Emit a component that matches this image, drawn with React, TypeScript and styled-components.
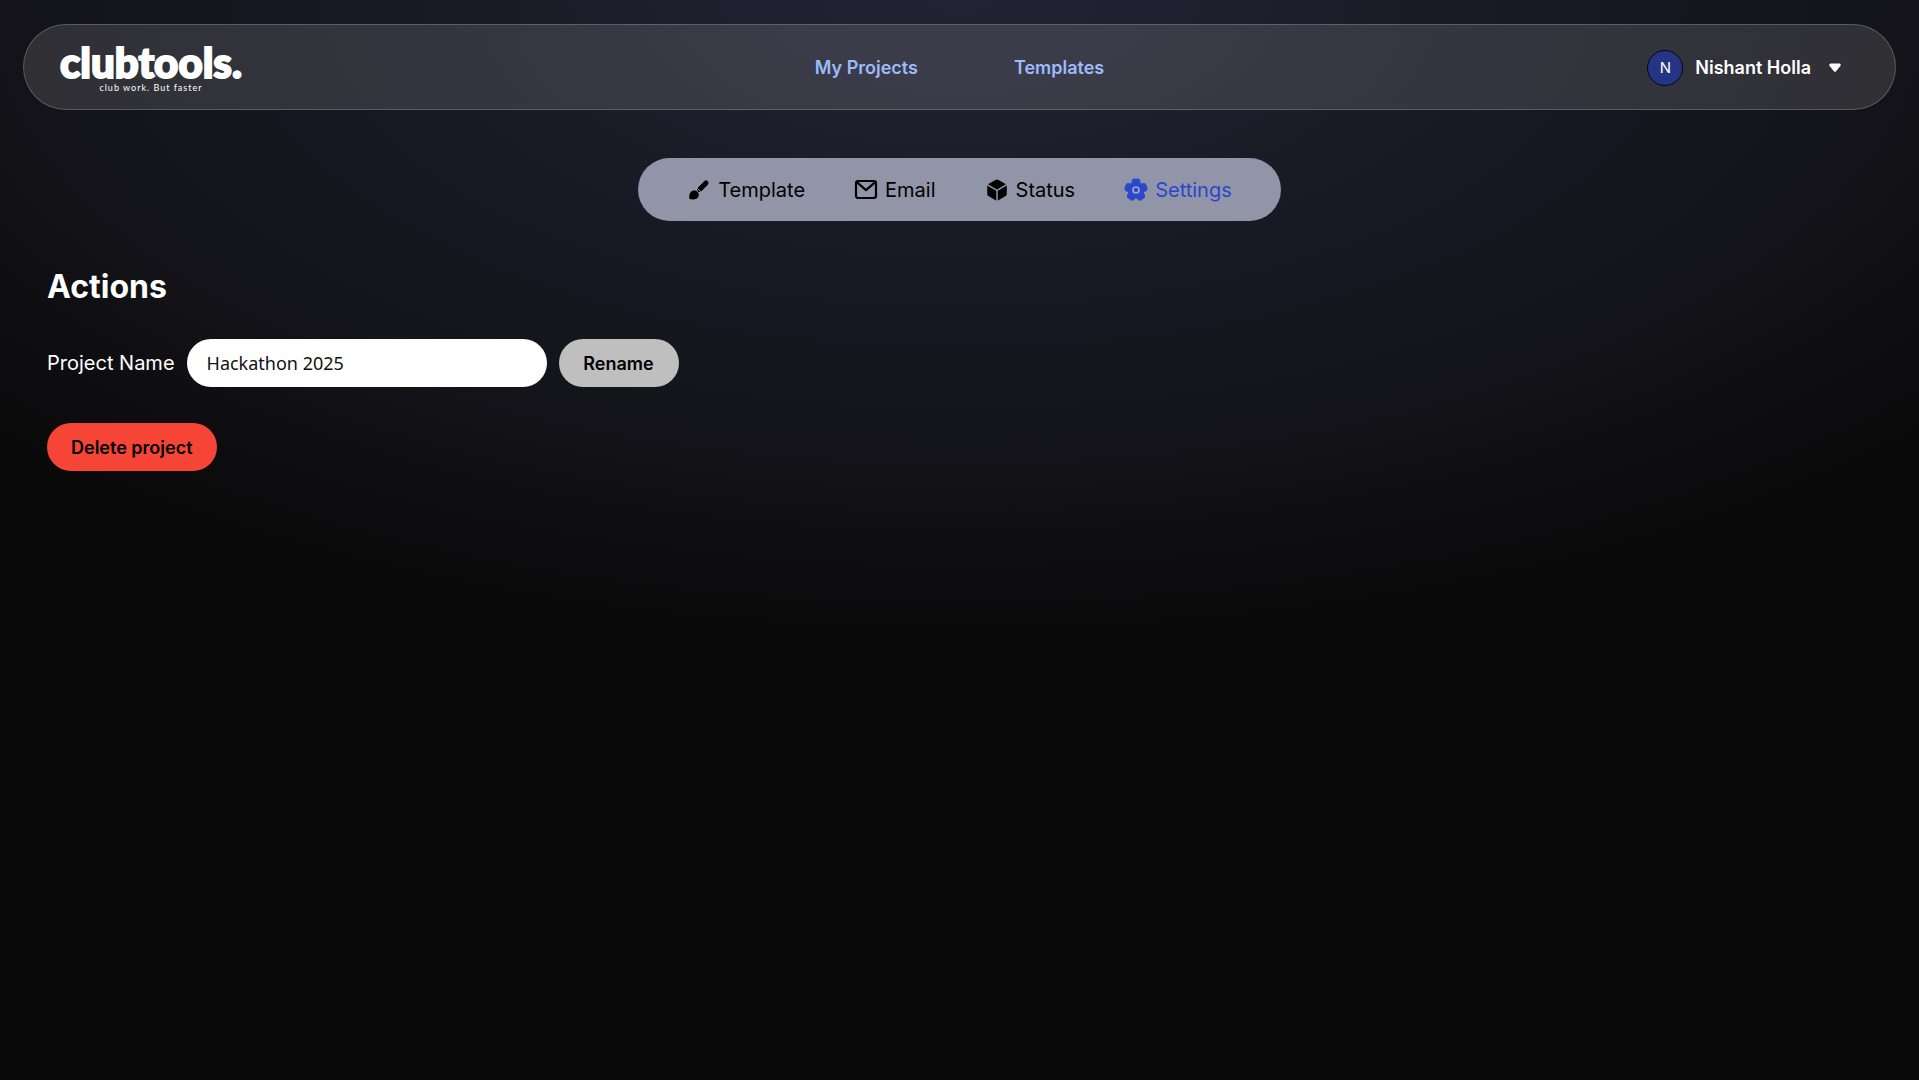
import React, { useState } from 'react';
import styled, { createGlobalStyle } from 'styled-components';
import { IoCube } from 'react-icons/io5';

const GlobalStyle = createGlobalStyle`
  *, *::before, *::after { box-sizing: border-box; }
  body {
    margin: 0;
    background: #090909;
    color: #fff;
    font-family: Inter, "Liberation Sans", sans-serif;
  }
`;

const Page = styled.div`
  min-height: 100vh;
  padding: 24px 23px 48px;
  background: radial-gradient(1357px 650px at 50% 0, #242335 0%, #181823 45%, #131319 70%, #090909 100%) no-repeat #090909;
`;

const Header = styled.header`
  display: grid;
  grid-template-columns: 1fr auto 1fr;
  align-items: center;
  height: 86px;
  padding: 0 36px;
  border: 1px solid rgba(255, 255, 255, 0.2);
  border-radius: 43px;
  background: rgba(255, 255, 255, 0.12);
`;

const Logo = styled.a`
  display: flex;
  flex-direction: column;
  align-items: center;
  justify-self: start;
  color: #fff;
  font-family: Lato, sans-serif;
  text-decoration: none;
`;

const LogoName = styled.span`
  font-size: 42px;
  font-weight: 900;
  line-height: 42px;
  -webkit-text-stroke: 2px #fff;
`;

const Tagline = styled.span`
  font-size: 9px;
  line-height: 10px;
  letter-spacing: 1px;
`;

const MainNav = styled.nav`
  display: flex;
  gap: 96px;
`;

const NavLink = styled.a`
  padding-top: 2px;
  color: #9bbcf9;
  font-size: 18px;
  font-weight: 600;
  line-height: 24px;
  text-decoration: none;
`;

const UserMenu = styled.button`
  display: flex;
  align-items: center;
  justify-self: end;
  gap: 12px;
  padding: 2px 0 0;
  border: 0;
  background: none;
  color: #fff;
  font: 600 18px/24px Inter, sans-serif;
  cursor: pointer;
`;

const Avatar = styled.span`
  display: grid;
  place-items: center;
  width: 36px;
  height: 36px;
  border: 1px solid #05070f;
  border-radius: 50%;
  background: #263583;
  font-size: 15px;
  font-weight: 400;
`;

const Caret = styled.svg`
  width: 12px;
  height: 10px;
  margin: 0 18px 0 6px;
`;

const Tabs = styled.nav`
  display: flex;
  align-items: center;
  gap: 49px;
  width: fit-content;
  height: 63px;
  margin: 48px auto 0;
  padding: 0 49px;
  border-radius: 32px;
  background: #9195a7;
`;

const Tab = styled.a<{ $active?: boolean }>`
  display: flex;
  align-items: center;
  gap: 7px;
  color: ${({ $active }) => ($active ? '#2b47cb' : '#000')};
  font-size: 20px;
  line-height: 28px;
  text-decoration: none;

  svg {
    width: 24px;
    height: 24px;
  }
`;

const Content = styled.main`
  padding: 0 24px;
`;

const Title = styled.h1`
  margin: 45px 0 31px;
  font-size: 32px;
  font-weight: 700;
  line-height: 42px;
`;

const Form = styled.form`
  display: flex;
  align-items: center;
  gap: 12px;
  margin-bottom: 36px;
`;

const Label = styled.label`
  font-size: 20px;
  line-height: 28px;
`;

const TextInput = styled.input`
  width: 360px;
  height: 48px;
  padding: 0 20px;
  border: 0;
  border-radius: 24px;
  background: #fff;
  color: #111;
  font: 18px "Noto Sans", sans-serif;
`;

const Button = styled.button<{ $danger?: boolean }>`
  min-width: 120px;
  height: 48px;
  padding: 2px 24px 0;
  border: 0;
  border-radius: 24px;
  background: ${({ $danger }) => ($danger ? '#f64436' : '#bfbfbf')};
  color: #000;
  font: 600 18px/24px Inter, sans-serif;
  cursor: pointer;
`;

const BrushIcon = () => (
  <svg viewBox="0 0 24 24" aria-hidden="true">
    <path d="M12.6 11.4 19 5" fill="none" stroke="currentColor" strokeWidth="5" strokeLinecap="round" />
    <path d="M9.8 9.8 14.4 14.4" fill="none" stroke="#9195a7" strokeWidth="1" />
    <path d="M2.4 21c-.3-2.8-.2-5.4 1.6-7.200 1.700-1.700 4.700-1.900 6.500-.1 1.800 1.800 1.800 4.600 0 6.400-1.900 1.800-5.200 1.500-8.100.9z" fill="currentColor" />
  </svg>
);

const MailIcon = () => (
  <svg viewBox="0 0 24 24" fill="none" stroke="currentColor" strokeWidth="2.2" strokeLinejoin="round" aria-hidden="true">
    <rect x="2" y="3" width="20" height="17" rx="2.2" />
    <path d="M2.8 4.200 12 12.200l9.200-8" />
  </svg>
);

const FlowerGearIcon = () => (
  <svg viewBox="0 0 24 24" aria-hidden="true">
    <g fill="currentColor">
      <circle cx="12" cy="12" r="8.4" />
      {[0, 72, 144, 216, 288].map((angle) => (
        <rect key={angle} x="7.7" y="0.5" width="8.6" height="9" rx="3" transform={`rotate(${angle} 12 12)`} />
      ))}
    </g>
    <circle cx="12" cy="12" r="3" fill="none" stroke="#9fa6c4" strokeWidth="1.7" />
  </svg>
);

export default function App() {
  const [name, setName] = useState('Hackathon 2025');

  return (
    <>
      <GlobalStyle />
      <Page>
        <Header>
          <Logo href="#">
            <LogoName>clubtools.</LogoName>
            <Tagline>club work. But faster</Tagline>
          </Logo>
          <MainNav>
            <NavLink href="#projects">My Projects</NavLink>
            <NavLink href="#templates">Templates</NavLink>
          </MainNav>
          <UserMenu type="button">
            <Avatar>N</Avatar>
            Nishant Holla
            <Caret viewBox="0 0 12 10" aria-hidden="true">
              <path d="M1.7 2h8.6L6 7.3z" fill="#fff" stroke="#fff" strokeWidth="2.8" strokeLinejoin="round" />
            </Caret>
          </UserMenu>
        </Header>
        <Tabs>
          <Tab href="#template"><BrushIcon />Template</Tab>
          <Tab href="#email"><MailIcon />Email</Tab>
          <Tab href="#status"><IoCube aria-hidden="true" />Status</Tab>
          <Tab href="#settings" $active aria-current="page"><FlowerGearIcon />Settings</Tab>
        </Tabs>
        <Content>
          <Title>Actions</Title>
          <Form onSubmit={(event) => event.preventDefault()}>
            <Label htmlFor="project-name">Project Name</Label>
            <TextInput id="project-name" value={name} onChange={(event) => setName(event.target.value)} />
            <Button type="submit">Rename</Button>
          </Form>
          <Button type="button" $danger>Delete project</Button>
        </Content>
      </Page>
    </>
  );
}
